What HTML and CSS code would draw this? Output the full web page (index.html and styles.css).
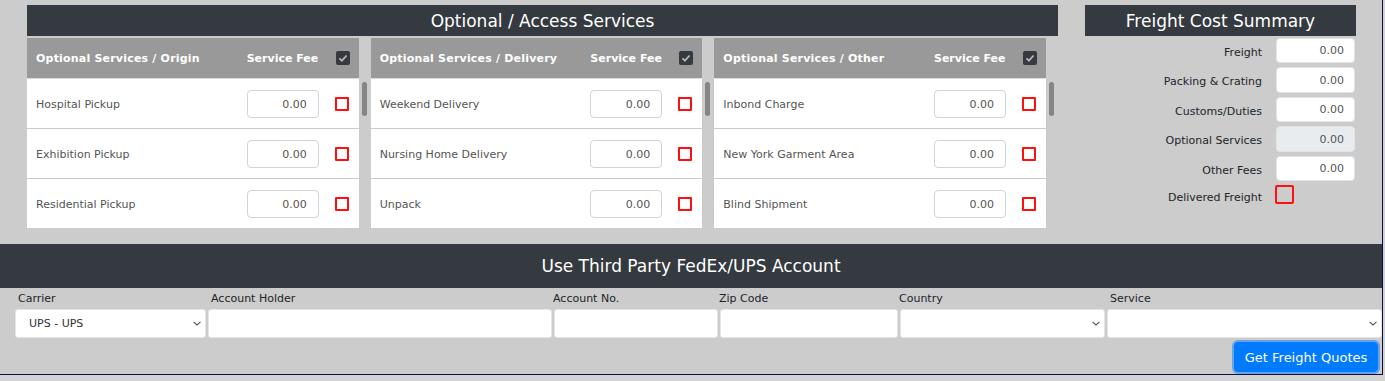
FILE: index.html
```html
<!DOCTYPE html>
<html lang="en">
<head>
    <meta charset="UTF-8">
    <title>Freight Quote</title>
    <link rel="stylesheet" href="styles.css">
</head>
<body>
<div class="page">
    <div class="top">
        <div class="optional">
            <div class="bar">Optional / Access Services</div>
            <div class="panels">
                <div class="panel">
                    <div class="panel-head">
                        <span class="head-name">Optional Services / Origin</span>
                        <span class="head-fee">Service Fee</span>
                        <span class="all-check"><svg width="14" height="14" viewBox="0 0 14 14"><path d="M3.4 7.3 L5.9 9.7 L10.6 4.5" fill="none" stroke="#b4b4b4" stroke-width="1.8"/></svg></span>
                    </div>
                    <div class="panel-body">
                        <div class="rows">
                            <div class="svc-row"><span class="svc-name">Hospital Pickup</span><input class="fee" value="0.00"><input type="checkbox" class="pick"></div>
                            <div class="svc-row"><span class="svc-name">Exhibition Pickup</span><input class="fee" value="0.00"><input type="checkbox" class="pick"></div>
                            <div class="svc-row"><span class="svc-name">Residential Pickup</span><input class="fee" value="0.00"><input type="checkbox" class="pick"></div>
                        </div>
                        <div class="scroll-track"><div class="scroll-thumb"></div></div>
                    </div>
                </div>
                <div class="panel">
                    <div class="panel-head">
                        <span class="head-name">Optional Services / Delivery</span>
                        <span class="head-fee">Service Fee</span>
                        <span class="all-check"><svg width="14" height="14" viewBox="0 0 14 14"><path d="M3.4 7.3 L5.9 9.7 L10.6 4.5" fill="none" stroke="#b4b4b4" stroke-width="1.8"/></svg></span>
                    </div>
                    <div class="panel-body">
                        <div class="rows">
                            <div class="svc-row"><span class="svc-name">Weekend Delivery</span><input class="fee" value="0.00"><input type="checkbox" class="pick"></div>
                            <div class="svc-row"><span class="svc-name">Nursing Home Delivery</span><input class="fee" value="0.00"><input type="checkbox" class="pick"></div>
                            <div class="svc-row"><span class="svc-name">Unpack</span><input class="fee" value="0.00"><input type="checkbox" class="pick"></div>
                        </div>
                        <div class="scroll-track"><div class="scroll-thumb"></div></div>
                    </div>
                </div>
                <div class="panel">
                    <div class="panel-head">
                        <span class="head-name">Optional Services / Other</span>
                        <span class="head-fee">Service Fee</span>
                        <span class="all-check"><svg width="14" height="14" viewBox="0 0 14 14"><path d="M3.4 7.3 L5.9 9.7 L10.6 4.5" fill="none" stroke="#b4b4b4" stroke-width="1.8"/></svg></span>
                    </div>
                    <div class="panel-body">
                        <div class="rows">
                            <div class="svc-row"><span class="svc-name">Inbond Charge</span><input class="fee" value="0.00"><input type="checkbox" class="pick"></div>
                            <div class="svc-row"><span class="svc-name">New York Garment Area</span><input class="fee" value="0.00"><input type="checkbox" class="pick"></div>
                            <div class="svc-row"><span class="svc-name">Blind Shipment</span><input class="fee" value="0.00"><input type="checkbox" class="pick"></div>
                        </div>
                        <div class="scroll-track"><div class="scroll-thumb"></div></div>
                    </div>
                </div>
            </div>
        </div>

        <div class="summary">
            <div class="bar">Freight Cost Summary</div>
            <div class="sum-grid">
                <label>Freight</label><input class="sum-input" value="0.00">
                <label>Packing &amp; Crating</label><input class="sum-input" value="0.00">
                <label>Customs/Duties</label><input class="sum-input" value="0.00">
                <label>Optional Services</label><input class="sum-input" value="0.00" disabled>
                <label>Other Fees</label><input class="sum-input" value="0.00">
                <label class="last">Delivered Freight</label><span><input type="checkbox" class="pick big"></span>
            </div>
        </div>
    </div>

    <div class="bar tp-bar">Use Third Party FedEx/UPS Account</div>
    <div class="tp-fields">
        <div class="tp-field">
            <label>Carrier</label>
            <div class="select-wrap">
                <select class="tp-input"><option>UPS - UPS</option></select>
                <svg class="chev" width="8" height="5" viewBox="0 0 8 5"><path d="M0.5 0.8 L4 4 L7.5 0.8" fill="none" stroke="#555" stroke-width="1.1"/></svg>
            </div>
        </div>
        <div class="tp-field">
            <label>Account Holder</label>
            <input class="tp-input">
        </div>
        <div class="tp-field tight">
            <label>Account No.</label>
            <input class="tp-input">
        </div>
        <div class="tp-field tight">
            <label>Zip Code</label>
            <input class="tp-input">
        </div>
        <div class="tp-field tight">
            <label>Country</label>
            <div class="select-wrap">
                <select class="tp-input"><option></option></select>
                <svg class="chev" width="8" height="5" viewBox="0 0 8 5"><path d="M0.5 0.8 L4 4 L7.5 0.8" fill="none" stroke="#555" stroke-width="1.1"/></svg>
            </div>
        </div>
        <div class="tp-field">
            <label>Service</label>
            <div class="select-wrap">
                <select class="tp-input"><option></option></select>
                <svg class="chev" width="8" height="5" viewBox="0 0 8 5"><path d="M0.5 0.8 L4 4 L7.5 0.8" fill="none" stroke="#555" stroke-width="1.1"/></svg>
            </div>
        </div>
    </div>
    <div class="actions">
        <button class="quote-btn">Get Freight Quotes</button>
    </div>
</div>
</body>
</html>
```

FILE: styles.css
```css
/* Base */
body {
    margin: 0;
    background: #d3d3d3;
    font-family: "DejaVu Sans", Verdana, sans-serif;
    font-size: 11px;
    color: #212529;
}

.page {
    width: 1382px;
    height: 374px;
    background: #cccccc;
    border-right: 1px solid #0d0d45;
    border-bottom: 1px solid #0d0d45;
}

/* Dark title bars */
.bar {
    background: #343a40;
    color: #fff;
    font-size: 17px;
    text-align: center;
    height: 31px;
    line-height: 32px;
}

/* Top area */
.top {
    display: grid;
    grid-template-columns: 1031px 271px;
    column-gap: 27px;
    padding: 5px 0 0 27px;
}

.panels {
    display: grid;
    grid-template-columns: repeat(3, 1fr);
    margin-top: 2px;
}

.panel-head {
    display: flex;
    align-items: center;
    height: 40px;
    margin-right: 12px;
    padding: 0 9px 0 9px;
    background: #999;
    color: #fff;
    font-weight: bold;
    border-bottom: 1px solid #dcdcdc;
}
.head-name {
    flex: 1;
    letter-spacing: 0.2px;
}
.head-fee {
    width: 72px;
}
.all-check {
    display: flex;
    width: 14px;
    height: 14px;
    margin-left: 17px;
    background: #343a40;
    border-radius: 2px;
}

/* Scrolling list of services (scrollbar drawn by hand) */
.panel-body {
    display: flex;
    height: 150px;
    overflow: hidden;
}
.rows {
    flex: 1;
}
.scroll-track {
    flex: none;
    width: 12px;
}
.scroll-thumb {
    width: 5px;
    height: 34px;
    margin: 3px 0 0 3px;
    background: #858585;
    border-radius: 3px;
}

.svc-row {
    display: flex;
    align-items: center;
    height: 48px;
    padding: 1px 10px 0 9px;
    background: #fff;
    border-bottom: 1px solid #ccc;
    color: #555;
}
.svc-name {
    flex: 1;
}

.fee {
    width: 72px;
    height: 28px;
    box-sizing: border-box;
    padding: 0 11px 0 4px;
    border: 1px solid #ced4da;
    border-radius: 4px;
    font-family: inherit;
    font-size: 11px;
    color: #555;
    text-align: right;
}

.pick {
    appearance: none;
    -webkit-appearance: none;
    width: 14px;
    height: 14px;
    margin: 0 0 0 16px;
    border: 2px solid #ff1010;
    border-radius: 1px;
    background: #fff;
}
.pick.big {
    width: 19px;
    height: 19px;
    margin: 0;
    border-radius: 2px;
    background: transparent;
}

/* Freight summary */
.sum-grid {
    display: grid;
    grid-template-columns: 1fr 79px;
    column-gap: 14px;
    row-gap: 4.3px;
    margin-top: 2px;
    padding-right: 1px;
    align-items: center;
}
.sum-grid label {
    text-align: right;
    padding-top: 3px;
}
.sum-grid label.last {
    padding-top: 5px;
}
.sum-input {
    width: 79px;
    height: 25.2px;
    box-sizing: border-box;
    padding: 0 10px 0 4px;
    border: 1px solid #e2e4e6;
    border-radius: 4px;
    background: #fff;
    font-family: inherit;
    font-size: 11px;
    color: #555;
    text-align: right;
}
.sum-input:disabled {
    background: #e9ecef;
}
.sum-grid span {
    display: flex;
    margin: 0 0 0 -1px;
}

/* Third party account */
.tp-bar {
    margin-top: 15px;
    height: 44px;
    line-height: 44px;
}

.tp-fields {
    display: grid;
    grid-template-columns: 191px 344px 164px 178px 205px 1fr;
    column-gap: 2px;
    padding: 1px 0 0 15px;
}
.tp-field label {
    display: block;
    height: 20px;
    line-height: 19px;
    padding-left: 3px;
}
.tp-field.tight label {
    padding-left: 0;
    margin-left: -1px;
}
.tp-input {
    display: block;
    width: 100%;
    height: 29px;
    box-sizing: border-box;
    padding: 0 20px 0 13px;
    border: 1px solid #e4e4e4;
    border-radius: 3px;
    background: #fff;
    font-family: inherit;
    font-size: 11px;
    color: #333;
}
select.tp-input {
    appearance: none;
    -webkit-appearance: none;
}

.select-wrap {
    position: relative;
}
.chev {
    position: absolute;
    right: 5px;
    top: 12px;
}

.actions {
    display: flex;
    justify-content: flex-end;
    padding: 4px 4px 0 0;
}
.quote-btn {
    width: 144px;
    height: 30px;
    border: 1px solid #007bff;
    border-radius: 4px;
    background: #007bff;
    color: #fff;
    font-family: inherit;
    font-size: 13px;
    box-shadow: 0 0 0 2px rgba(0, 123, 255, 0.5);
}
```
